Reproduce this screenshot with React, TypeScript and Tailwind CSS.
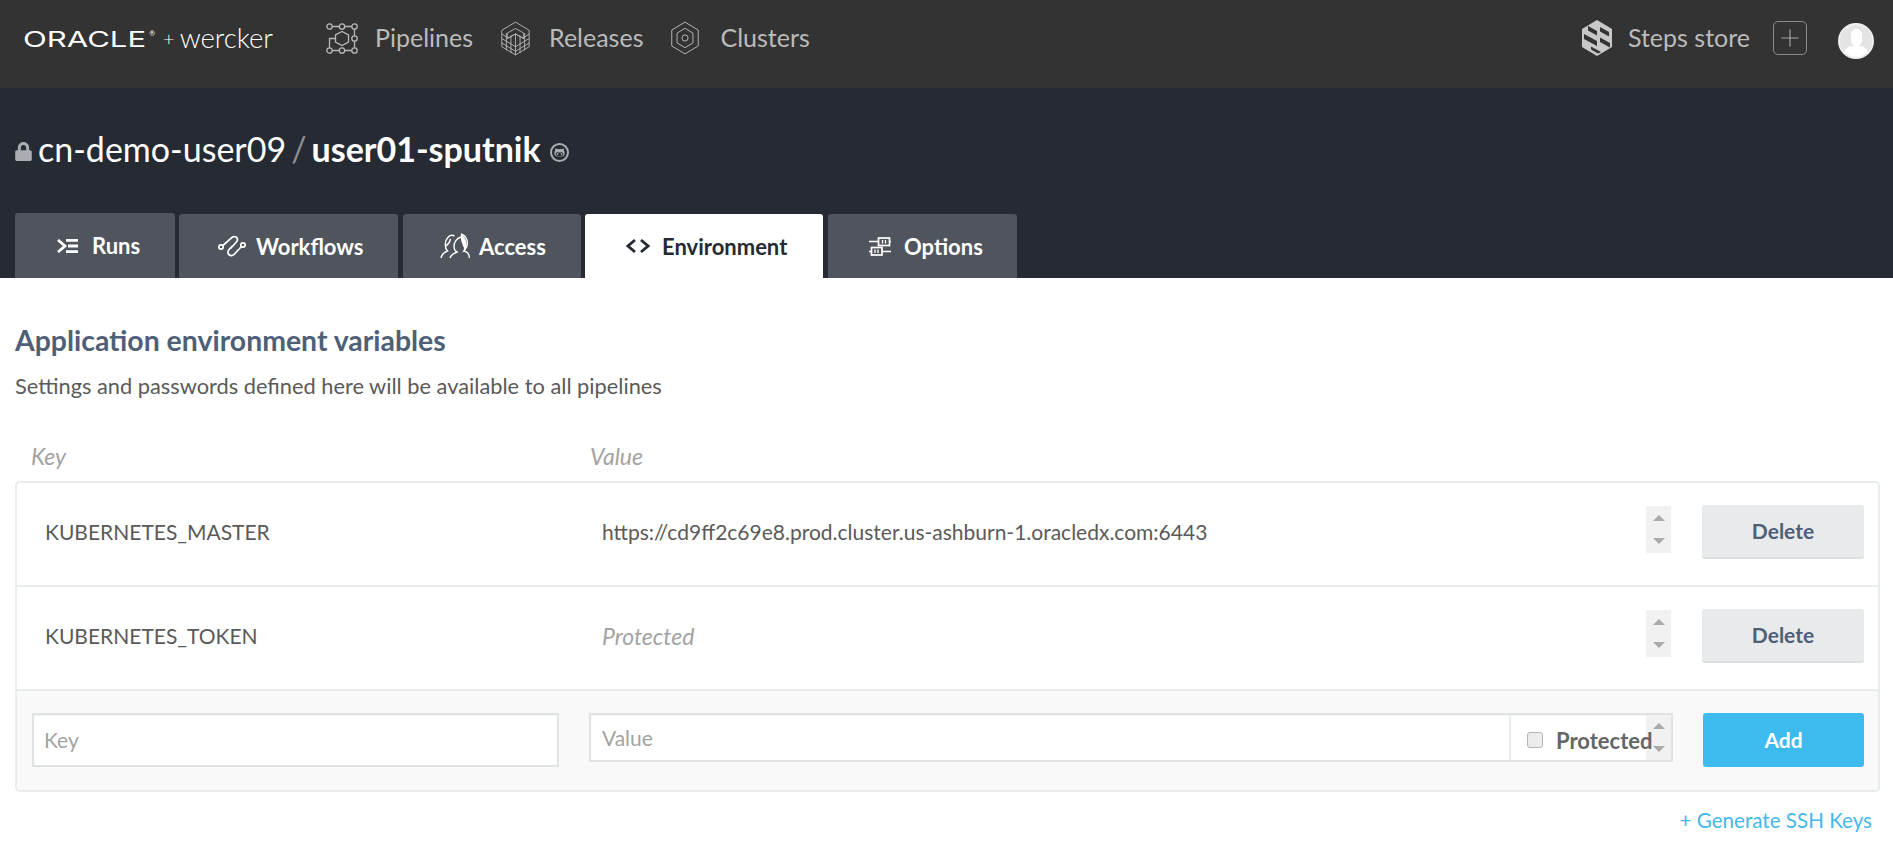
import { Plus } from "lucide-react";
import { FaGithubAlt, FaLock } from "react-icons/fa";

const font = { fontFamily: "Lato, sans-serif" };

function PipelinesIcon() {
  return (
    <svg width="32" height="31" viewBox="0 0 32 31" fill="none" stroke="#b8b8b8" strokeWidth="1.300">
      <circle cx="3.500" cy="3.500" r="2.700" />
      <circle cx="16" cy="3.500" r="2.700" />
      <circle cx="28.500" cy="3.500" r="2.700" />
      <circle cx="28.500" cy="15.500" r="2.700" />
      <circle cx="3.500" cy="27.500" r="2.700" />
      <circle cx="16" cy="27.500" r="2.700" />
      <circle cx="28.500" cy="27.500" r="2.700" />
      <path d="M6.200 3.500h7M18.700 3.500h7M6.200 27.500h7M18.700 27.500h7M28.500 6.200v6.600M28.500 18.200v6.600M3.500 24.800v-9.300h6" />
      <path d="M16 8.500l6.500 3.500v7L16 22.500 9.500 19v-7z" />
    </svg>
  );
}

function ReleasesIcon() {
  return (
    <svg width="31" height="35" viewBox="0 0 34 38" fill="none" stroke="#b8b8b8" strokeWidth="1">
      <path d="M17 1l15 9v18l-15 9-15-9V10z" />
      <path d="M17 8l9 5v6l-9-5-9 5v-6z" />
      <path d="M2 14l6 4M26 18l6-4M8 19l9-5 9 5M2 19l15 9 15-9M2 24l15 9 15-9M7 13v19M12 16v19M22 16v19M27 13v19M17 14v23" />
    </svg>
  );
}

function ClustersIcon() {
  return (
    <svg width="30" height="34" viewBox="0 0 34 38" fill="none" stroke="#b8b8b8" strokeWidth="1.100">
      <path d="M17 1l15 9v18l-15 9-15-9V10z" />
      <path d="M17 8l9 5.500v11l-9 5.500-9-5.500v-11z" />
      <circle cx="17" cy="19" r="3.500" />
    </svg>
  );
}

function StepsIcon() {
  return (
    <svg width="32" height="36" viewBox="0 0 32 36">
      <path d="M16 0l15 9v18l-15 9-15-9V9z" fill="#c8c8c8" />
      <path
        d="M7 6l9 5v4.500l-9-5zM3 14l13 7v5L3 19zM19 7l9 5v4.500l-9-5zM19 17.500l10 5.500v4.500l-10-5.500zM10 26.500l10 5.500-3 1.500-7-4z"
        fill="#333333"
      />
    </svg>
  );
}

function RunsIcon() {
  return (
    <svg width="21" height="14" viewBox="0 0 21 14" fill="none" stroke="#ffffff" strokeWidth="2.800">
      <path d="M1 1l7 6-7 6M9 1.400h12M11 7h10M9 12.600h12" />
    </svg>
  );
}

function WorkflowsIcon() {
  return (
    <svg width="28" height="22" viewBox="0 0 28 22" fill="none" stroke="#ffffff" strokeWidth="1.700">
      <circle cx="3" cy="12" r="2.200" />
      <circle cx="25" cy="10" r="2.200" />
      <path d="M5 10.500L14 2.500c2-2 5.500-.5 5.500 2 0 1.500-1 2.500-2 3.500l-5 5.500" />
      <path d="M23.500 11.500L16 19.500c-2 2-5.500 1-6-1.500-.3-1.500.5-3 1.500-4l3-3" />
    </svg>
  );
}

function AccessIcon() {
  return (
    <svg width="30" height="26" viewBox="0 0 30 26" fill="none" stroke="#ffffff" strokeWidth="1.400">
      <path d="M1 25c1-5 4-6 6.500-7-3-3-3-10 0-13 2-3 5-3 7-2" />
      <path d="M5.500 13c2-1 4-3 5-7" />
      <path d="M21 1c6 2 8 9 5 14l-2 3c3 1 5 2 5.500 7" />
      <path d="M21 4c-4 1-7 5-7 9 0 3 1 5 3 6-2 1-6 2-7 6" />
      <path d="M21 1c-1 5 1 9 3 14 0 3-1 4-3 5 4-1 7-5 5-12-1-3-3-6-5-7z" fill="#ffffff" stroke="none" />
    </svg>
  );
}

function OptionsIcon() {
  return (
    <svg width="22" height="19" viewBox="0 0 22 19" fill="none" stroke="#ffffff" strokeWidth="1.700">
      <path d="M0 4.500h9M21 4.500h1M0 14.500h2M13 14.500h9" />
      <rect x="9.500" y="1" width="11" height="7.500" />
      <rect x="2.500" y="10.500" width="10.500" height="7.500" />
      <path d="M13.500 3v3.500M16.500 3v3.500M6 12.500V16M9 12.500V16" strokeWidth="1.300" />
    </svg>
  );
}

function NavLink({ icon, label, gap }: { icon: React.ReactNode; label: string; gap: string }) {
  return (
    <a className={`flex items-center text-[25px] text-[#bbbbbb] ${gap}`}>
      {icon}
      <span>{label}</span>
    </a>
  );
}

function Spinner({ className }: { className: string }) {
  return (
    <div className={`flex w-[25px] flex-col items-center justify-between bg-[#f1f1f1] ${className}`}>
      <span className="h-0 w-0 border-x-[6px] border-b-[6px] border-x-transparent border-b-[#a9a9a9]" />
      <span className="h-0 w-0 border-x-[6px] border-t-[6px] border-x-transparent border-t-[#a9a9a9]" />
    </div>
  );
}

function Tab({ className, children }: { className: string; children: React.ReactNode }) {
  return <div className={`flex items-center rounded-t-[3px] bg-[#50555d] ${className}`}>{children}</div>;
}

function Row({ name, value, italic }: { name: string; value: string; italic?: boolean }) {
  return (
    <div className="flex h-[104px] items-center border-b-2 border-[#e8ecec] pb-[4px] pl-[28px] pr-[14px] text-[21px] text-[#5a5a5a]">
      <div className="w-[557px] shrink-0">{name}</div>
      <div className={`flex-1 ${italic ? "text-[23px] italic text-[#a3a3a3]" : ""}`}>{value}</div>
      <Spinner className="mb-[5px] h-[47px] py-[9px]" />
      <button className="ml-[31px] h-[54px] w-[162px] rounded-[3px] border-b-2 border-[#dde1e1] bg-[#e8ebeb] text-[21px] font-bold text-[#4e5f78]">
        Delete
      </button>
    </div>
  );
}

export default function App() {
  return (
    <div className="h-[844px] overflow-hidden bg-white" style={font}>
      <header className="flex h-[88px] items-center bg-[#333333] pb-[12px] pr-[19px]">
        <div className="ml-[23px] flex w-[303px] items-center text-white">
          <span className="mt-[3px] inline-block origin-left scale-x-[1.480] text-[21px]" style={{ fontFamily: "Inter, sans-serif" }}>
            ORACLE
          </span>
          <span className="mb-[10px] ml-[43px] text-[7px]">®</span>
          <span className="ml-[8px] text-[20px] font-light">+</span>
          <span className="ml-[5px] text-[27.500px] font-light">wercker</span>
        </div>
        <nav className="flex items-center gap-[27px]">
          <NavLink icon={<PipelinesIcon />} label="Pipelines" gap="gap-[17px]" />
          <NavLink icon={<ReleasesIcon />} label="Releases" gap="gap-[18px]" />
          <NavLink icon={<ClustersIcon />} label="Clusters" gap="gap-[20px]" />
        </nav>
        <div className="ml-auto flex items-center">
          <NavLink icon={<StepsIcon />} label="Steps store" gap="gap-[15px]" />
          <div className="ml-[23px] flex h-[34px] w-[34px] items-center justify-center rounded-[5px] border border-[#888888]">
            <Plus size={28} strokeWidth={1} color="#a5a5a5" />
          </div>
          <div className="relative ml-[31px] mt-[6px] h-[36px] w-[36px] overflow-hidden rounded-full border-2 border-[#eeeeee] bg-[#e4e4e4]">
            <div className="absolute left-[11px] top-[4px] h-[17px] w-[11px] rounded-full bg-white" />
            <div className="absolute bottom-0 left-[4px] h-[11px] w-[24px] rounded-t-[8px] bg-white" />
          </div>
        </div>
      </header>

      <section className="flex h-[190px] flex-col justify-between bg-[#252a33]">
        <h1 className="ml-[14px] mt-[41px] flex items-center text-[34px] leading-[40px] text-white">
          <FaLock size={19} color="#a9acb0" className="mr-[5px] mt-[5px]" />
          <span>cn-demo-user09</span>
          <span className="mx-[5px] text-[#8c8f94]">/</span>
          <span className="font-bold">user01-sputnik</span>
          <span className="ml-[9px] mt-[6px] flex h-[19px] w-[19px] items-center justify-center rounded-full border-[2px] border-[#a9acb0]">
            <FaGithubAlt size={11} color="#a9acb0" />
          </span>
        </h1>
        <div className="ml-[15px] flex items-end gap-[4px] text-[22px] font-bold text-white">
          <Tab className="h-[65px] w-[160px] gap-[14px] pl-[42px]"><RunsIcon />Runs</Tab>
          <Tab className="h-[64px] w-[219px] gap-[10px] pl-[39px]"><WorkflowsIcon />Workflows</Tab>
          <Tab className="ml-[1px] h-[64px] w-[178px] gap-[9px] pl-[37px]"><AccessIcon />Access</Tab>
          <div className="flex h-[64px] w-[238px] items-center gap-[12px] rounded-t-[3px] bg-white pl-[41px] text-[#252a33]">
            <svg width="24" height="16" viewBox="0 0 24 16" fill="none" stroke="#252a33" strokeWidth="2.800">
              <path d="M9 2L2 8l7 6M15 2l7 6-7 6" />
            </svg>
            Environment
          </div>
          <Tab className="ml-[1px] h-[64px] w-[189px] gap-[13px] pl-[41px]"><OptionsIcon />Options</Tab>
        </div>
      </section>

      <main className="px-[15px]">
        <h2 className="mt-[45px] text-[28.400px] font-bold leading-[34px] text-[#4e5f78]">Application environment variables</h2>
        <p className="mt-[16px] text-[21.800px] leading-[26px] text-[#5a5a5a]">
          Settings and passwords defined here will be available to all pipelines
        </p>
        <div className="mt-[44px] flex pl-[16px] text-[23px] italic leading-[26px] text-[#a3a3a3]">
          <div className="w-[559px]">Key</div>
          <div>Value</div>
        </div>
        <div className="mt-[12px] w-[1865px] overflow-hidden rounded-[5px] border-2 border-[#e8ecec]">
          <Row name="KUBERNETES_MASTER" value="https://cd9ff2c69e8.prod.cluster.us-ashburn-1.oracledx.com:6443" />
          <Row name="KUBERNETES_TOKEN" value="Protected" italic />
          <div className="flex h-[99px] items-start bg-[#f9f9f9] pl-[15px] pr-[14px] pt-[22px] text-[21px]">
            <div className="flex h-[54px] w-[527px] items-center border-2 border-[#dfe3e3] bg-white pl-[10px] text-[#a3a3a3] shadow-[inset_0_1px_2px_rgba(0,0,0,0.05)]">
              Key
            </div>
            <div className="ml-[30px] flex h-[49px] flex-1 border-2 border-[#dfe3e3] bg-white shadow-[inset_0_1px_2px_rgba(0,0,0,0.05)]">
              <div className="flex flex-1 items-center pl-[11px] pt-[1px] text-[#a3a3a3]">Value</div>
              <div className="relative flex w-[162px] items-center border-l-2 border-[#e8ecec] pl-[16px] pt-[5px] text-[22px] font-bold text-[#666666]">
                <span className="h-[16px] w-[16px] rounded-[3px] border border-[#b5b5b5] bg-[#ececec]" />
                <span className="relative z-10 ml-[13px] mt-[1px]">Protected</span>
                <Spinner className="absolute right-0 top-0 h-[45px] py-[8px]" />
              </div>
            </div>
            <button className="ml-[30px] h-[54px] w-[161px] rounded-[3px] bg-[#3dbbee] text-[21px] font-bold text-white">Add</button>
          </div>
        </div>
        <div className="mt-[15px] w-[1857px] text-right text-[20.600px] leading-[26px] text-[#45b8ea]">+ Generate SSH Keys</div>
      </main>
    </div>
  );
}
